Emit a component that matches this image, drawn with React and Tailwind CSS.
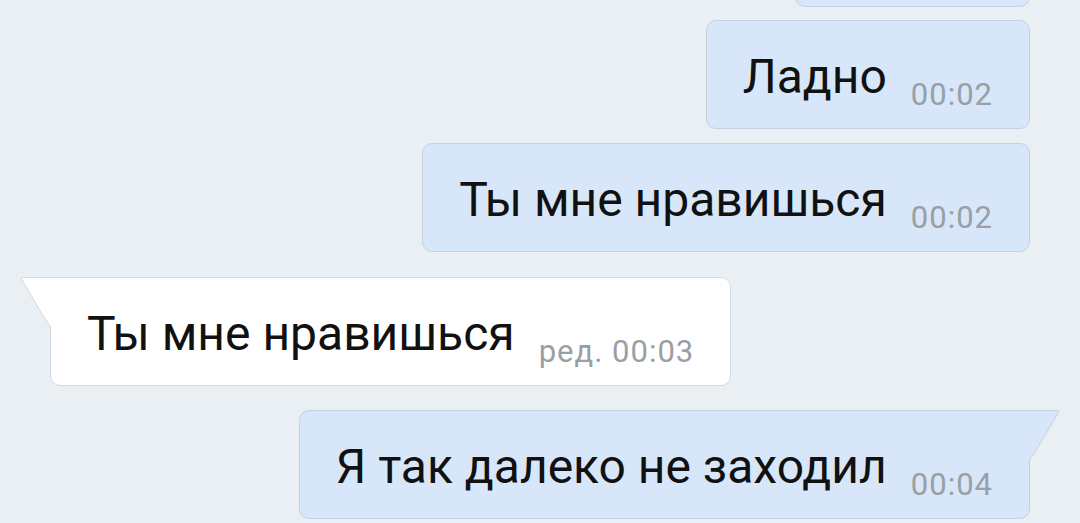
const font = { fontFamily: "Roboto, 'Noto Sans', sans-serif" };

const messages = [
  { id: 1, text: "Ладно", time: "00:02", out: true },
  { id: 2, text: "Ты мне нравишься", time: "00:02", out: true },
  { id: 3, text: "Ты мне нравишься", time: "ред. 00:03", out: false, tail: true },
  { id: 4, text: "Я так далеко не заходил", time: "00:04", out: true, tail: true },
];

const gaps = ["mt-[13px]", "mt-[14px]", "mt-[25px]", "mt-[24px]"];

function Tail({ out }) {
  if (out) {
    return (
      <svg className="absolute -right-[31px] -top-px" width="33" height="52" viewBox="0 0 33 52">
        <path d="M0 1 H30 Q31.5 1 30.5 3 L10 38 Q3 48 1 52 V1 Z" fill="#d7e6f8" />
        <path d="M0 0.5 H30 Q32.5 0.5 31 3 L10.5 38 Q4 48 1.5 52" fill="none" stroke="#c3d1e1" strokeWidth="1" />
      </svg>
    );
  }
  return (
    <svg className="absolute -left-[31px] -top-px" width="33" height="52" viewBox="0 0 33 52">
      <path d="M33 1 H3 Q1.5 1 2.5 3 L23 38 Q30 48 32 52 V1 Z" fill="#ffffff" />
      <path d="M33 0.5 H3 Q0.5 0.5 2 3 L22.5 38 Q29 48 31.5 52" fill="none" stroke="#d3dae3" strokeWidth="1" />
    </svg>
  );
}

function Bubble({ text, time, out, tail }) {
  const corners = tail ? (out ? "rounded-[10px] rounded-tr-none" : "rounded-[10px] rounded-tl-none") : "rounded-[10px]";
  return (
    <div className={`relative flex h-[109px] items-start gap-[24px] border px-[36px] ${corners} ${out ? "border-[#c3d1e1] bg-[#d7e6f8]" : "border-[#d3dae3] bg-white"}`}>
      {tail && <Tail out={out} />}
      <span className="mt-[32px] whitespace-nowrap text-[48px] leading-[48px] text-[#111]">{text}</span>
      <span className="mt-[58px] whitespace-nowrap text-[31px] leading-[31px] tracking-[1px] text-[#9a9fa5]">{time}</span>
    </div>
  );
}

export default function App() {
  return (
    <div style={font} className="h-[523px] w-[1080px] overflow-hidden bg-[#eaeff4]">
      <div className="flex flex-col px-[50px]">
        <div className="-mt-[100px] self-end">
          <div className="h-[107px] w-[235px] rounded-[10px] border border-[#c3d1e1] bg-[#d7e6f8]" />
        </div>
        {messages.map((m, i) => (
          <div key={m.id} className={`${m.out ? "self-end" : "self-start"} ${gaps[i]}`}>
            <Bubble {...m} />
          </div>
        ))}
      </div>
    </div>
  );
}
